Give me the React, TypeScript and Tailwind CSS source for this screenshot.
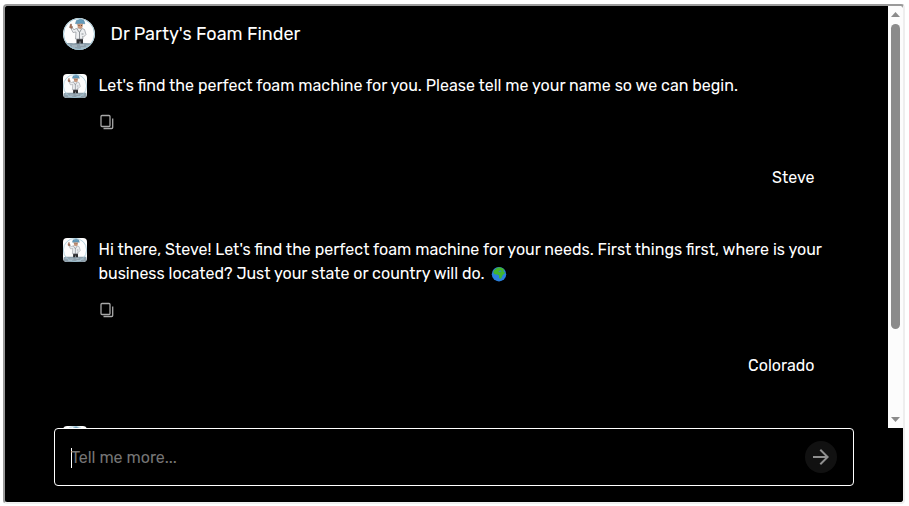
type Message = {
    from: "bot" | "user" | "pending";
    text?: string;
    globe?: boolean;
};

const messages: Message[] = [
    { from: "bot", text: "Let's find the perfect foam machine for you. Please tell me your name so we can begin." },
    { from: "user", text: "Steve" },
    {
        from: "bot",
        text: "Hi there, Steve! Let's find the perfect foam machine for your needs. First things first, where is your business located? Just your state or country will do.",
        globe: true,
    },
    { from: "user", text: "Colorado" },
    { from: "pending" },
];

function Doctor({ className }: { className: string }) {
    return (
        <svg viewBox="0 0 32 32" className={className} aria-hidden="true">
            <rect width="32" height="32" fill="#fdfdfd" />
            <path d="M1 25.5C6 24.5 9 25.500 14 25s12 .5 17 0l1 7H0Z" fill="#8d9fab" />
            <path d="M3 27h4m2 1h5m3-1h4m2 1h5M7 30h5m6 0h6" stroke="#b9c6cf" strokeWidth="1" />
            <circle cx="16" cy="16" r="15.500" fill="none" stroke="#9cc4d4" strokeWidth="1" />
            <path d="M13.500 20h6.500v5.500h-2.500l-.5-3-.5 3h-3Z" fill="#2b2b2e" />
            <path d="m12 11 3-1h3l3.500 1.500 1.500 5-2.500 2.500-1-.5.500 2.500h-7.500l.5-7-3 .5-2.500-5 1.500-.5 2 3Z" fill="#eceef0" stroke="#8f9499" strokeWidth=".7" />
            <path d="m14 11 2.500 3.500 2-3.500M16.500 14.500V21M18.500 16h2" fill="none" stroke="#686e74" strokeWidth=".7" />
            <path d="M6.500 9.500 7.500 6h1v2l1 .5-.5 2Z" fill="#a9745b" stroke="#6f4c3d" strokeWidth=".4" />
            <path d="M14 5.500h6l-.5 4-2 1.500-2.500-1Z" fill="#cb997c" />
            <path d="M15.500 7.500h1m1.500 0h1" stroke="#463831" strokeWidth=".8" />
            <path d="M12.500 5.500 13.500 2.500l4-1.300 3.500 1.300.8 3.300-3.800-.5-4.500.5Z" fill="#669cbb" stroke="#47799a" strokeWidth=".5" />
        </svg>
    );
}

function Globe() {
    return (
        <svg viewBox="0 0 16 16" className="ml-1.5 inline-block size-4 align-text-bottom" role="img" aria-label="globe">
            <circle cx="8" cy="7.200" r="7.200" fill="#2a7fdc" />
            <path d="M2.800 3.500 6 .8 9 .3l3 1.200 1.500 1.700-1.300.3.800 1.500 1.200.5-1 1.500-1.500 1-1 2.500L9.500 12 8 11V8.500L6.500 7.500l-3-.3L2.300 5.500Z" fill="#43b52d" />
            <path d="m7.500 4 2.500-.5.500 1-2.500.6Z" fill="#2a7fdc" />
        </svg>
    );
}

function CopyIcon() {
    return (
        <svg viewBox="0 0 16 16" className="size-4" fill="none" stroke="#a8a8a8" strokeWidth="1.300" aria-hidden="true">
            <rect x="2" y="1.500" width="9" height="11" rx="1" />
            <path d="M13.700 4.500v9a1 1 0 0 1-1 1H4.500" />
        </svg>
    );
}

function SendIcon() {
    return (
        <svg viewBox="0 0 24 24" className="size-6" fill="#8f8f8f" aria-hidden="true">
            <path d="m12 4-1.410 1.410L16.170 11H4v2h12.170l-5.580 5.590L12 20l8-8z" />
        </svg>
    );
}

function BotMessage({ message }: { message: Message }) {
    return (
        <div className="flex gap-3">
            <Doctor className="size-6 shrink-0 rounded" />
            {message.text && (
                <div className="min-w-0 flex-1">
                    <p>
                        {message.text}
                        {message.globe && <Globe />}
                    </p>
                    <button type="button" aria-label="Copy message" className="mt-4 block">
                        <CopyIcon />
                    </button>
                </div>
            )}
        </div>
    );
}

function ScrollBar() {
    return (
        <div className="flex w-[15px] shrink-0 flex-col items-center bg-[#fcfcfc] py-[5px]" aria-hidden="true">
            <svg viewBox="0 0 9 7" className="h-[7px] w-[9px]" fill="#8b8b8b">
                <path d="M0 6 4.500 1 9 6Z" />
            </svg>
            <div className="my-1.5 flex-1">
                <div className="h-[79%] w-[9px] rounded-full bg-[#8b8b8b]" />
            </div>
            <svg viewBox="0 0 9 7" className="h-[7px] w-[9px]" fill="#8b8b8b">
                <path d="M0 1 4.500 6 9 1Z" />
            </svg>
        </div>
    );
}

export default function App() {
    return (
        <div className="h-screen bg-white pt-1 pr-1 pb-0.5 pl-[3px] font-[Rubik,Roboto,sans-serif] text-base text-white">
            <div className="flex h-full flex-col overflow-hidden rounded border-2 border-t-[#9a9a9a] border-r-[#eeeeee] border-b-[#eeeeee] border-l-[#9a9a9a] bg-black">
                <div className="flex min-h-0 flex-1">
                    <main className="min-w-0 flex-1 overflow-hidden">
                        <div className="mx-auto max-w-[800px] px-4 pt-3">
                            <header className="flex items-center gap-4">
                                <Doctor className="size-8 rounded-full" />
                                <h1 className="text-lg">Dr Party's Foam Finder</h1>
                            </header>
                            <div className="mt-6 flex flex-col">
                                {messages.map((message, i) =>
                                    message.from === "user" ? (
                                        <p key={i} className="mt-9 mb-12 pr-4 text-right">
                                            {message.text}
                                        </p>
                                    ) : (
                                        <BotMessage key={i} message={message} />
                                    )
                                )}
                            </div>
                        </div>
                    </main>
                    <ScrollBar />
                </div>
                <form className="mx-auto mb-4 flex h-[58px] w-full max-w-[800px] items-center rounded border border-white px-4" onSubmit={(e) => e.preventDefault()}>
                    <div className="flex min-w-0 flex-1 items-center pt-0.5">
                        <span className="-mr-px h-5 w-px bg-white" />
                        <input
                            type="text"
                            aria-label="Message"
                            placeholder="Tell me more..."
                            className="min-w-0 flex-1 bg-transparent text-white outline-none placeholder:text-[#757575]"
                        />
                    </div>
                    <button type="submit" aria-label="Send" className="flex size-8 items-center justify-center rounded-full bg-[#111111]">
                        <SendIcon />
                    </button>
                </form>
            </div>
        </div>
    );
}
